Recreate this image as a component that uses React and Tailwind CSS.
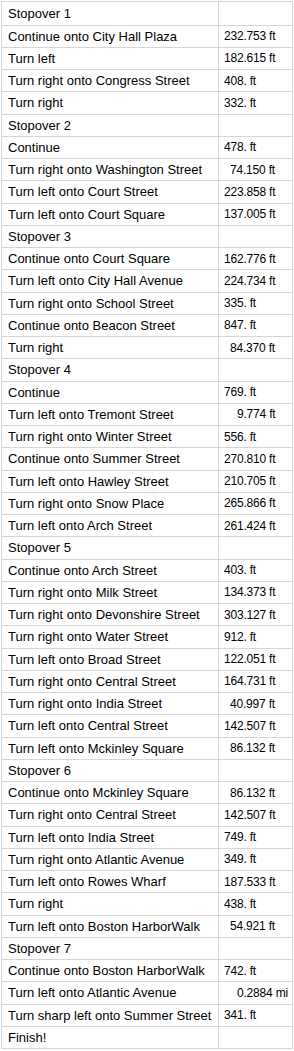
import React from 'react';

const rows = [
  ['Stopover 1'],
  ['Continue onto City Hall Plaza', '232.753 ft'],
  ['Turn left', '182.615 ft'],
  ['Turn right onto Congress Street', '408. ft'],
  ['Turn right', '332. ft'],
  ['Stopover 2'],
  ['Continue', '478. ft'],
  ['Turn right onto Washington Street', '74.150 ft'],
  ['Turn left onto Court Street', '223.858 ft'],
  ['Turn left onto Court Square', '137.005 ft'],
  ['Stopover 3'],
  ['Continue onto Court Square', '162.776 ft'],
  ['Turn left onto City Hall Avenue', '224.734 ft'],
  ['Turn right onto School Street', '335. ft'],
  ['Continue onto Beacon Street', '847. ft'],
  ['Turn right', '84.370 ft'],
  ['Stopover 4'],
  ['Continue', '769. ft'],
  ['Turn left onto Tremont Street', '9.774 ft'],
  ['Turn right onto Winter Street', '556. ft'],
  ['Continue onto Summer Street', '270.810 ft'],
  ['Turn left onto Hawley Street', '210.705 ft'],
  ['Turn right onto Snow Place', '265.866 ft'],
  ['Turn left onto Arch Street', '261.424 ft'],
  ['Stopover 5'],
  ['Continue onto Arch Street', '403. ft'],
  ['Turn right onto Milk Street', '134.373 ft'],
  ['Turn right onto Devonshire Street', '303.127 ft'],
  ['Turn right onto Water Street', '912. ft'],
  ['Turn left onto Broad Street', '122.051 ft'],
  ['Turn right onto Central Street', '164.731 ft'],
  ['Turn right onto India Street', '40.997 ft'],
  ['Turn left onto Central Street', '142.507 ft'],
  ['Turn left onto Mckinley Square', '86.132 ft'],
  ['Stopover 6'],
  ['Continue onto Mckinley Square', '86.132 ft'],
  ['Turn right onto Central Street', '142.507 ft'],
  ['Turn left onto India Street', '749. ft'],
  ['Turn right onto Atlantic Avenue', '349. ft'],
  ['Turn left onto Rowes Wharf', '187.533 ft'],
  ['Turn right', '438. ft'],
  ['Turn left onto Boston HarborWalk', '54.921 ft'],
  ['Stopover 7'],
  ['Continue onto Boston HarborWalk', '742. ft'],
  ['Turn left onto Atlantic Avenue', '0.2884 mi'],
  ['Turn sharp left onto Summer Street', '341. ft'],
  ['Finish!'],
];

// decimal-align: indent by how many integer digits are missing
const indent = (v) => {
  const digits = v.split('.')[0].length;
  if (digits === 1) return 'pl-[13px]';
  if (digits === 2) return 'pl-[6px]';
  return 'pl-0';
};

export default function App() {
  return (
    <div className="w-[294px] bg-white font-['Liberation_Sans',Arial,sans-serif] text-black">
      <div className="mt-px ml-px w-[292px] border-t border-l border-[#d6d6d6]">
        {rows.map(([label, value], i) => (
          <div
            key={i}
            className={`flex border-b border-[#d6d6d6] ${i === 0 ? 'h-[23.5px]' : 'h-[22.26px]'}`}
          >
            <div className="flex w-[217px] shrink-0 items-center border-r border-[#d6d6d6] pl-[6px] text-[13px] leading-none whitespace-nowrap">
              {label}
            </div>
            <div className="flex flex-1 items-center border-r border-[#d6d6d6] pl-[5px] text-[12px] leading-none tracking-[-0.2px] whitespace-nowrap">
              {value && <span className={indent(value)}>{value}</span>}
            </div>
          </div>
        ))}
      </div>
    </div>
  );
}
